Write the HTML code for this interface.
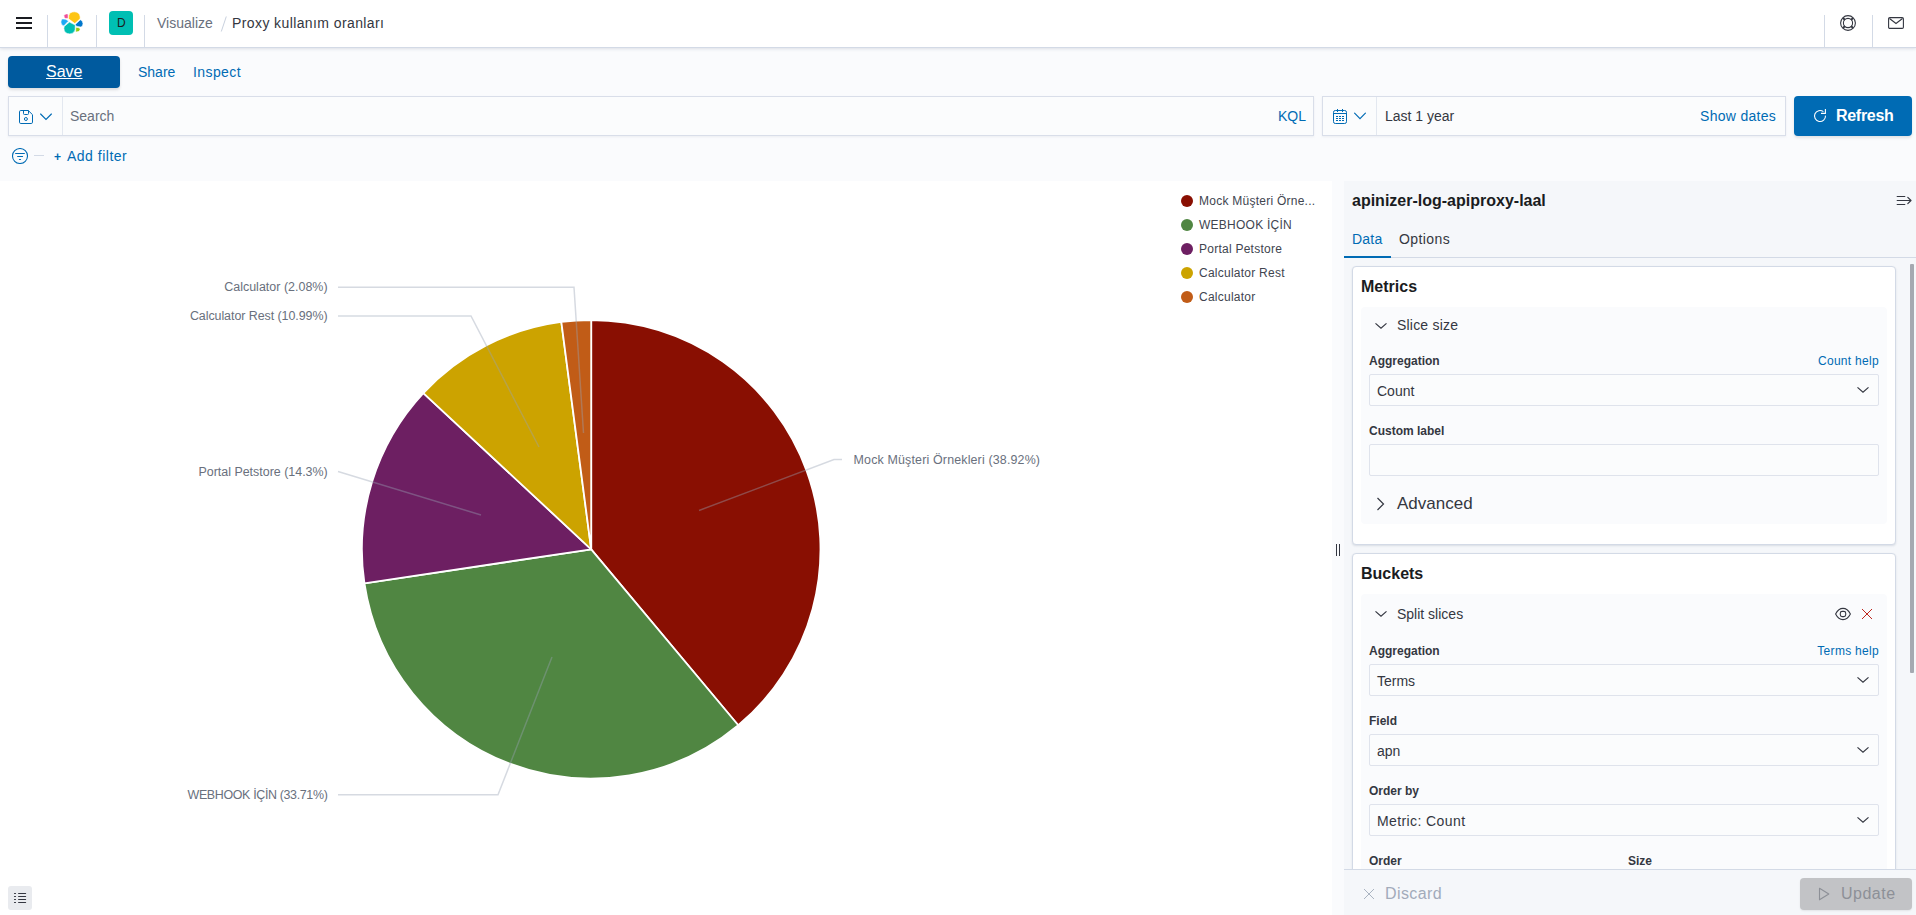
<!DOCTYPE html>
<html><head><meta charset="utf-8">
<style>
*{box-sizing:border-box;margin:0;padding:0}
html,body{width:1916px;height:915px;overflow:hidden;background:#FAFBFD;font-family:"Liberation Sans",sans-serif;color:#343741}
.a{position:absolute}
.t{position:absolute;white-space:nowrap;line-height:1}
#hdr{left:0;top:0;width:1916px;height:48px;background:#fff;border-bottom:1px solid #D3DAE6;box-shadow:0 1px 3px rgba(152,162,179,.3)}
.vdiv{position:absolute;top:15px;width:1px;height:33px;background:#D3DAE6}
.link{color:#006BB4}
.fld{position:absolute;background:#FBFCFD;border:1px solid #DFE3EC;border-radius:2px}
.lbl{position:absolute;white-space:nowrap;line-height:1;font-size:12px;font-weight:bold;color:#343741}
.card{position:absolute;background:#fff;border:1px solid #D3DAE6;border-radius:4px;box-shadow:0 1px 2px rgba(152,162,179,.3)}
.sec{position:absolute;background:#FAFBFD;border-radius:4px}
.chev{position:absolute}
</style></head><body>
<!-- HEADER -->
<div id="hdr" class="a"></div>
<div class="a" style="left:16px;top:17px;width:16px;height:2px;background:#1a1c21"></div>
<div class="a" style="left:16px;top:22px;width:16px;height:2px;background:#1a1c21"></div>
<div class="a" style="left:16px;top:27px;width:16px;height:2px;background:#1a1c21"></div>
<div class="vdiv" style="left:47px"></div>
<div class="vdiv" style="left:96px"></div>
<div class="vdiv" style="left:144px"></div>
<div class="vdiv" style="left:1824px"></div>
<div class="vdiv" style="left:1872px"></div>
<!-- elastic logo -->
<svg class="a" style="left:60px;top:11px" width="24" height="24" viewBox="0 0 24 24" stroke="#fff" stroke-width=".6" stroke-linejoin="round">
<path d="M4 4.6 Q4.6 3 6.2 2.9 L8.1 3 L8.1 7.5 L5.2 7.4 Q3.8 6.8 4 4.6Z" fill="#F04E98"/>
<path d="M8.8 4.5 Q9.6 0.9 14.5 0.8 Q19.6 1 20.2 6 L20.1 7.8 L14.85 12.6 L8.6 7.8 Z" fill="#FEC514"/>
<path d="M2.5 8 Q5.5 7.4 8.2 9.7 L8.2 10.3 L3.9 14.9 Q1 14.5 0.9 11 Q0.9 8.6 2.5 8Z" fill="#1BA9F5"/>
<path d="M4.2 15.4 L9.4 11.1 L15.3 14.05 L15.1 19 Q14 22.9 9.8 22.9 Q4 22.6 3.9 17.5Z" fill="#00BFB3"/>
<path d="M15.3 13.4 L20.3 8.8 Q22.8 9.5 23 12.4 Q23 15.7 20.5 16 L16.2 15.2Z" fill="#0077CC"/>
<path d="M15.8 16.2 L19 16.8 Q20.2 17.3 20.1 18.8 Q19.6 20.9 16.5 20.9 L15.7 20.5Z" fill="#93C90E"/>
</svg>
<div class="a" style="left:109px;top:11px;width:24px;height:24px;border-radius:4px;background:#00BFB3"></div>
<div class="t" style="left:117px;top:17px;font-size:12px;color:#1a1c21">D</div>
<div class="t" style="left:157px;top:16px;font-size:14px;color:#69707D">Visualize</div>
<svg class="a" style="left:219px;top:15px" width="10" height="18"><path d="M7.3 1.5 L2.3 16.5" stroke="#C9D1DE" stroke-width="1"/></svg>
<div class="t" style="left:232px;top:16px;font-size:14px;color:#343741;letter-spacing:.4px">Proxy kullanım oranları</div>
<!-- help & mail icons -->
<svg class="a" style="left:1840px;top:15px" width="16" height="16" viewBox="0 0 16 16" fill="none" stroke="#343741">
<circle cx="8" cy="8" r="7.4" stroke-width="1.1"/><circle cx="8" cy="8" r="4.6" stroke-width="1.1"/>
<path d="M3 3 L5 5 M13 3 L11 5 M3 13 L5 11 M13 13 L11 11" stroke-width="1.8"/>
</svg>
<svg class="a" style="left:1888px;top:17px" width="16" height="12" viewBox="0 0 16 12" fill="none" stroke="#343741" stroke-width="1.1">
<rect x=".6" y=".6" width="14.8" height="10.8" rx="1.2"/><path d="M1.5 1.5 L8 6.5 L14.5 1.5"/>
</svg>

<!-- TOP NAV -->
<div class="a" style="left:8px;top:56px;width:112px;height:32px;background:#005A9E;border-radius:4px;box-shadow:0 2px 3px rgba(0,0,0,.12)"></div>
<div class="t" style="left:46px;top:64px;font-size:16px;color:#fff;text-decoration:underline">Save</div>
<div class="t link" style="left:138px;top:65px;font-size:14px">Share</div>
<div class="t link" style="left:193px;top:65px;font-size:14px;letter-spacing:.4px">Inspect</div>

<!-- SEARCH BAR -->
<div class="a" style="left:8px;top:96px;width:1306px;height:40px;background:#FBFCFD;border:1px solid #D9DEE9;box-shadow:0 1px 2px rgba(152,162,179,.15)"></div>
<div class="a" style="left:62px;top:97px;width:1px;height:38px;background:#E3E8F0"></div>
<svg class="a" style="left:19px;top:110px" width="14" height="14" viewBox="0 0 14 14" fill="none" stroke="#006BB4" stroke-width="1">
<path d="M1.8 .5 H9.3 L13.5 4.7 V12.2 Q13.5 13.5 12.2 13.5 H1.8 Q.5 13.5 .5 12.2 V1.8 Q.5 .5 1.8 .5Z"/><path d="M4.5 .5 V3.6 Q4.5 4.5 5.4 4.5 H8.6 Q9.5 4.5 9.5 3.6 V.5"/><circle cx="6.9" cy="9" r="1.5"/>
</svg>
<svg class="a" style="left:40px;top:113px" width="12" height="8" viewBox="0 0 12 8" fill="none" stroke="#006BB4" stroke-width="1.15" stroke-linecap="round"><path d="M.6 1 L6 6.4 L11.4 1"/></svg>
<div class="t" style="left:70px;top:109px;font-size:14px;color:#69707D">Search</div>
<div class="t link" style="left:1278px;top:109px;font-size:14px">KQL</div>

<div class="a" style="left:1322px;top:96px;width:464px;height:40px;background:#FBFCFD;border:1px solid #D9DEE9;box-shadow:0 1px 2px rgba(152,162,179,.15)"></div>
<div class="a" style="left:1376px;top:97px;width:1px;height:38px;background:#E3E8F0"></div>
<svg class="a" style="left:1333px;top:109px" width="14" height="15" viewBox="0 0 14 15" fill="none" stroke="#006BB4" stroke-width="1">
<rect x=".5" y="1.5" width="13" height="13" rx="1.8"/><path d="M.5 4.5 H13.5 M4.5 0 V3 M9.5 0 V3" />
<g fill="#006BB4" stroke="none"><rect x="3" y="7" width="2" height="1"/><rect x="6" y="7" width="2" height="1"/><rect x="9" y="7" width="2" height="1"/><rect x="3" y="9" width="2" height="1"/><rect x="6" y="9" width="2" height="1"/><rect x="9" y="9" width="2" height="1"/><rect x="3" y="11" width="2" height="1"/><rect x="6" y="11" width="2" height="1"/><rect x="9" y="11" width="2" height="1"/></g>
</svg>
<svg class="a" style="left:1354px;top:112px" width="12" height="8" viewBox="0 0 12 8" fill="none" stroke="#006BB4" stroke-width="1.15" stroke-linecap="round"><path d="M.6 1.2 L6 6.6 L11.4 1.2"/></svg>
<div class="t" style="left:1385px;top:109px;font-size:14px;color:#343741">Last 1 year</div>
<div class="t link" style="left:1700px;top:109px;font-size:14px;letter-spacing:.3px">Show dates</div>

<div class="a" style="left:1794px;top:96px;width:118px;height:40px;background:#006BB4;border-radius:4px;box-shadow:0 2px 3px rgba(0,0,0,.1)"></div>
<svg class="a" style="left:1813px;top:108px" width="15" height="15" viewBox="0 0 15 15" fill="none" stroke="#fff" stroke-width="1.1">
<path d="M10.39 3.67 A5.5 5.5 0 1 0 12.49 7.62"/><path d="M8 5.4 H12.4 V.9"/>
</svg>
<div class="t" style="left:1836px;top:108px;font-size:16px;font-weight:bold;color:#fff;letter-spacing:-.3px">Refresh</div>

<!-- FILTER ROW -->
<svg class="a" style="left:12px;top:148px" width="16" height="16" viewBox="0 0 16 16" fill="none" stroke="#006BB4" stroke-width="1.05" stroke-linecap="round">
<circle cx="8" cy="8" r="7.5"/><path d="M3.6 5.5 H12.4 M5.6 8.5 H10.6 M7.4 11.5 H8.6"/>
</svg>
<div class="a" style="left:34px;top:155px;width:10px;height:1px;background:#D3DAE6"></div>
<div class="t link" style="left:54px;top:151px;font-size:12px;font-weight:bold">+</div><div class="t link" style="left:67px;top:149px;font-size:14px;letter-spacing:.5px">Add filter</div>

<!-- VIS AREA -->
<div class="a" style="left:0;top:181px;width:1332px;height:734px;background:#fff"></div>
<svg class="a" style="left:0;top:0" width="1332" height="915">
<g stroke="#fff" stroke-width="1.8" stroke-linejoin="round">
<path d="M591.20 549.30L591.20 320.00A229.3 229.3 0 0 1 738.25 725.24Z" fill="#890F02"/>
<path d="M591.20 549.30L738.25 725.24A229.3 229.3 0 0 1 364.44 583.32Z" fill="#508642"/>
<path d="M591.20 549.30L364.44 583.32A229.3 229.3 0 0 1 423.36 393.07Z" fill="#6D1F62"/>
<path d="M591.20 549.30L423.36 393.07A229.3 229.3 0 0 1 561.32 321.96Z" fill="#CCA300"/>
<path d="M591.20 549.30L561.32 321.96A229.3 229.3 0 0 1 591.20 320.00Z" fill="#C15C17"/>
</g>
<g fill="none" stroke="rgba(152,162,179,.4)" stroke-width="1.5">
<polyline points="338,287.3 574,287.3 583.5,433"/>
<polyline points="338,316 471,316 539,447"/>
<polyline points="338,471.5 481,515"/>
<polyline points="842,459.5 834,459.5 699,510.5"/>
<polyline points="338,794.7 498,794.7 552,657"/>
</g>
<g font-family="Liberation Sans" font-size="12.45" fill="#69707D" text-anchor="end">
<text x="327.6" y="291" textLength="103.4" lengthAdjust="spacing">Calculator (2.08%)</text>
<text x="327.6" y="320" textLength="137.7" lengthAdjust="spacing">Calculator Rest (10.99%)</text>
<text x="327.7" y="475.5" textLength="129.2" lengthAdjust="spacing">Portal Petstore (14.3%)</text>
<text x="327.8" y="799" textLength="140.3" lengthAdjust="spacing">WEBHOOK İÇİN (33.71%)</text>
<text x="853.6" y="464" text-anchor="start" textLength="186.4" lengthAdjust="spacing">Mock Müşteri Örnekleri (38.92%)</text>
</g>
</svg>
<!-- legend -->
<div class="a" style="left:1181px;top:195px;width:12px;height:12px;border-radius:50%;background:#890F02"></div>
<div class="a" style="left:1181px;top:219px;width:12px;height:12px;border-radius:50%;background:#508642"></div>
<div class="a" style="left:1181px;top:243px;width:12px;height:12px;border-radius:50%;background:#6D1F62"></div>
<div class="a" style="left:1181px;top:267px;width:12px;height:12px;border-radius:50%;background:#CCA300"></div>
<div class="a" style="left:1181px;top:291px;width:12px;height:12px;border-radius:50%;background:#C15C17"></div>
<div class="t" style="left:1199px;top:195px;font-size:12px;color:#41454F;letter-spacing:.25px">Mock Müşteri Örne...</div>
<div class="t" style="left:1199px;top:219px;font-size:12px;color:#41454F;letter-spacing:.25px">WEBHOOK İÇİN</div>
<div class="t" style="left:1199px;top:243px;font-size:12px;color:#41454F;letter-spacing:.25px">Portal Petstore</div>
<div class="t" style="left:1199px;top:267px;font-size:12px;color:#41454F;letter-spacing:.25px">Calculator Rest</div>
<div class="t" style="left:1199px;top:291px;font-size:12px;color:#41454F;letter-spacing:.25px">Calculator</div>
<!-- legend toggle -->
<div class="a" style="left:8px;top:886px;width:24px;height:24px;border-radius:3px;background:#E9EBEF"></div>
<svg class="a" style="left:13px;top:892px" width="14" height="12" viewBox="0 0 14 12" fill="none" stroke="#343741" stroke-width="1.15" stroke-linecap="round"><path d="M1.5 1.5 H2.5 M1.5 4.5 H2.5 M1.5 7.5 H2.5 M1.5 10.5 H2.5 M5.6 1.5 H12.6 M5.6 4.5 H12.6 M5.6 7.5 H12.6 M5.6 10.5 H12.6"/></svg>

<!-- SIDEBAR -->
<div class="a" style="left:1344px;top:181px;width:572px;height:734px;background:#F5F7FA"></div>
<div class="a" style="left:1336px;top:544px;width:1px;height:12px;background:#343741"></div>
<div class="a" style="left:1339px;top:544px;width:1px;height:12px;background:#343741"></div>
<div class="t" style="left:1352px;top:193px;font-size:16px;font-weight:bold;color:#1a1c21">apinizer-log-apiproxy-laal</div>
<svg class="a" style="left:1896px;top:195px" width="16" height="11" viewBox="0 0 16 11" fill="none" stroke="#343741" stroke-width="1.2">
<path d="M1.2 1.5 H8.8 M1.2 5.5 H14.6 M1.2 9.5 H8.8 M11.8 2.3 L15 5.5 L11.8 8.7" stroke-linecap="round" stroke-linejoin="round"/>
</svg>
<div class="t link" style="left:1352px;top:232px;font-size:14px;letter-spacing:.2px">Data</div>
<div class="t" style="left:1399px;top:232px;font-size:14px;color:#343741;letter-spacing:.4px">Options</div>
<div class="a" style="left:1344px;top:257px;width:572px;height:1px;background:#D3DAE6"></div>
<div class="a" style="left:1344px;top:256px;width:47px;height:2px;background:#006BB4"></div>
<div class="a" style="left:1910px;top:264px;width:4px;height:409px;background:#A5A9B1;border-radius:1px"></div>

<!-- Metrics card -->
<div class="card" style="left:1352px;top:266px;width:544px;height:279px"></div>
<div class="t" style="left:1361px;top:279px;font-size:16px;font-weight:bold;color:#1a1c21">Metrics</div>
<div class="sec" style="left:1361px;top:307px;width:526px;height:217px"></div>
<svg class="chev" style="left:1374px;top:321px" width="14" height="9" viewBox="0 0 14 9" fill="none" stroke="#343741" stroke-width="1.2"><path d="M1.5 2.4 L7 7.3 L12.5 2.4"/></svg>
<div class="t" style="left:1397px;top:318px;font-size:14px;color:#343741;letter-spacing:.2px">Slice size</div>
<div class="lbl" style="left:1369px;top:355px">Aggregation</div>
<div class="t link" style="right:37px;top:355px;font-size:12px;letter-spacing:.3px">Count help</div>
<div class="fld" style="left:1369px;top:374px;width:510px;height:32px"></div>
<div class="t" style="left:1377px;top:384px;font-size:14px;color:#343741">Count</div>
<svg class="chev" style="left:1856px;top:385px" width="14" height="9" viewBox="0 0 14 9" fill="none" stroke="#343741" stroke-width="1.2"><path d="M1.5 2.4 L7 7.3 L12.5 2.4"/></svg>
<div class="lbl" style="left:1369px;top:425px">Custom label</div>
<div class="fld" style="left:1369px;top:444px;width:510px;height:32px"></div>
<svg class="chev" style="left:1376px;top:497px" width="9" height="14" viewBox="0 0 9 14" fill="none" stroke="#343741" stroke-width="1.2"><path d="M1.5 1 L7.5 7 L1.5 13"/></svg>
<div class="t" style="left:1397px;top:495px;font-size:17px;color:#343741">Advanced</div>

<!-- Buckets card -->
<div class="card" style="left:1352px;top:553px;width:544px;height:400px"></div>
<div class="t" style="left:1361px;top:566px;font-size:16px;font-weight:bold;color:#1a1c21">Buckets</div>
<div class="sec" style="left:1361px;top:594px;width:526px;height:300px"></div>
<svg class="chev" style="left:1374px;top:609px" width="14" height="9" viewBox="0 0 14 9" fill="none" stroke="#343741" stroke-width="1.2"><path d="M1.5 2.4 L7 7.3 L12.5 2.4"/></svg>
<div class="t" style="left:1397px;top:607px;font-size:14px;color:#343741">Split slices</div>
<svg class="a" style="left:1834px;top:607px" width="18" height="14" viewBox="0 0 18 14" fill="none" stroke="#343741" stroke-width="1.1">
<path d="M1.6 7 Q4.5 1.4 9 1.4 Q13.5 1.4 16.4 7 Q13.5 12.6 9 12.6 Q4.5 12.6 1.6 7Z" stroke-linejoin="round"/><rect x="6.3" y="4.4" width="5.4" height="5.2" rx="1.9"/>
</svg>
<svg class="a" style="left:1861px;top:608px" width="12" height="12" viewBox="0 0 12 12" fill="none" stroke="#BD271E" stroke-width="1"><path d="M1 1 L11 11 M11 1 L1 11"/></svg>
<div class="lbl" style="left:1369px;top:645px">Aggregation</div>
<div class="t link" style="right:37px;top:645px;font-size:12px;letter-spacing:.3px">Terms help</div>
<div class="fld" style="left:1369px;top:664px;width:510px;height:32px"></div>
<div class="t" style="left:1377px;top:674px;font-size:14px;color:#343741">Terms</div>
<svg class="chev" style="left:1856px;top:675px" width="14" height="9" viewBox="0 0 14 9" fill="none" stroke="#343741" stroke-width="1.2"><path d="M1.5 2.4 L7 7.3 L12.5 2.4"/></svg>
<div class="lbl" style="left:1369px;top:715px">Field</div>
<div class="fld" style="left:1369px;top:734px;width:510px;height:32px"></div>
<div class="t" style="left:1377px;top:744px;font-size:14px;color:#343741">apn</div>
<svg class="chev" style="left:1856px;top:745px" width="14" height="9" viewBox="0 0 14 9" fill="none" stroke="#343741" stroke-width="1.2"><path d="M1.5 2.4 L7 7.3 L12.5 2.4"/></svg>
<div class="lbl" style="left:1369px;top:785px">Order by</div>
<div class="fld" style="left:1369px;top:804px;width:510px;height:32px"></div>
<div class="t" style="left:1377px;top:814px;font-size:14px;color:#343741;letter-spacing:.4px">Metric: Count</div>
<svg class="chev" style="left:1856px;top:815px" width="14" height="9" viewBox="0 0 14 9" fill="none" stroke="#343741" stroke-width="1.2"><path d="M1.5 2.4 L7 7.3 L12.5 2.4"/></svg>
<div class="lbl" style="left:1369px;top:855px">Order</div>
<div class="lbl" style="left:1628px;top:855px">Size</div>

<!-- footer -->
<div class="a" style="left:1344px;top:869px;width:572px;height:46px;background:#F5F7FA;border-top:1px solid #D3DAE6"></div>
<svg class="a" style="left:1363px;top:888px" width="12" height="12" viewBox="0 0 12 12" fill="none" stroke="#A2ABBA" stroke-width=".9"><path d="M1 1 L11 11 M11 1 L1 11"/></svg>
<div class="t" style="left:1385px;top:886px;font-size:16px;letter-spacing:.4px;color:#A2ABBA">Discard</div>
<div class="a" style="left:1800px;top:878px;width:112px;height:32px;border-radius:4px;background:#C2C3C6;box-shadow:0 1px 2px rgba(0,0,0,.08)"></div>
<svg class="a" style="left:1818px;top:887px" width="12" height="14" viewBox="0 0 12 14" fill="none" stroke="#8D9097" stroke-width="1.1"><path d="M1.5 1.2 L10.8 7 L1.5 12.8Z" stroke-linejoin="round"/></svg>
<div class="t" style="left:1841px;top:886px;font-size:16px;letter-spacing:.5px;color:#8D9097">Update</div>
</body></html>
